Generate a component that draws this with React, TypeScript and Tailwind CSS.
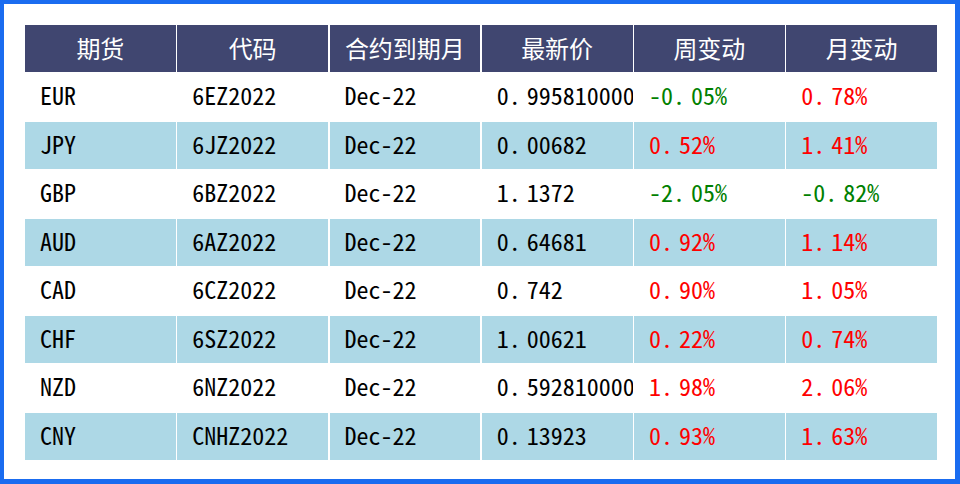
import React from "react";

type Row = { c: string; code: string; m: string; p: string; w: string; mo: string };

const rows: Row[] = [
  { c: "EUR", code: "6EZ2022", m: "Dec-22", p: "0.995810000", w: "-0.05%", mo: "0.78%" },
  { c: "JPY", code: "6JZ2022", m: "Dec-22", p: "0.00682", w: "0.52%", mo: "1.41%" },
  { c: "GBP", code: "6BZ2022", m: "Dec-22", p: "1.1372", w: "-2.05%", mo: "-0.82%" },
  { c: "AUD", code: "6AZ2022", m: "Dec-22", p: "0.64681", w: "0.92%", mo: "1.14%" },
  { c: "CAD", code: "6CZ2022", m: "Dec-22", p: "0.742", w: "0.90%", mo: "1.05%" },
  { c: "CHF", code: "6SZ2022", m: "Dec-22", p: "1.00621", w: "0.22%", mo: "0.74%" },
  { c: "NZD", code: "6NZ2022", m: "Dec-22", p: "0.592810000", w: "1.98%", mo: "2.06%" },
  { c: "CNY", code: "CNHZ2022", m: "Dec-22", p: "0.13923", w: "0.93%", mo: "1.63%" },
];

const headers = ["期货", "代码", "合约到期月", "最新价", "周变动", "月变动"];

const mono = { fontFamily: '"Noto Sans Mono CJK SC", "Noto Sans CJK SC", "DejaVu Sans Mono", monospace' };

function pctColor(v: string) {
  return v.startsWith("-") ? "text-[#008000]" : "text-[#ff0000]";
}

function Num({ v }: { v: string }) {
  const idx = v.indexOf(".");
  if (idx < 0) return <>{v}</>;
  return (
    <>
      {v.slice(0, idx)}
      <span className="mr-[6px]">.</span>
      {v.slice(idx + 1)}
    </>
  );
}

export default function App() {
  return (
    <div className="w-[960px] h-[484px] bg-white border-l-4 border-t-4 border-r-[5px] border-b-[5px] border-[#1a6cf0] box-border">
      <div className="pt-[21px] pl-[21px] w-[933px]">
        <div className="flex flex-col gap-[1.5px] w-[912px]">
          <div className="grid grid-cols-6 gap-[1.5px] h-[47px]">
            {headers.map((h) => (
              <div
                key={h}
                className="bg-[#404670] text-white text-[24px] flex items-center justify-center pb-[1px]"
                style={{ fontFamily: '"Noto Sans CJK SC", sans-serif' }}
              >
                {h}
              </div>
            ))}
          </div>
          {rows.map((r, i) => (
            <div key={r.c} className="grid grid-cols-6 gap-[1.5px] h-[47px]">
              {[r.c, r.code, r.m, r.p, r.w, r.mo].map((v, j) => (
                <div
                  key={j}
                  className={`${i % 2 === 1 ? "bg-[#add8e6]" : "bg-white"} ${
                    j >= 4 ? pctColor(v) : "text-black"
                  } text-[24px] flex items-center pl-[15px] pb-[4px] overflow-hidden whitespace-nowrap`}
                  style={mono}
                >
                  {j >= 3 ? <Num v={v} /> : v}
                </div>
              ))}
            </div>
          ))}
        </div>
      </div>
    </div>
  );
}
